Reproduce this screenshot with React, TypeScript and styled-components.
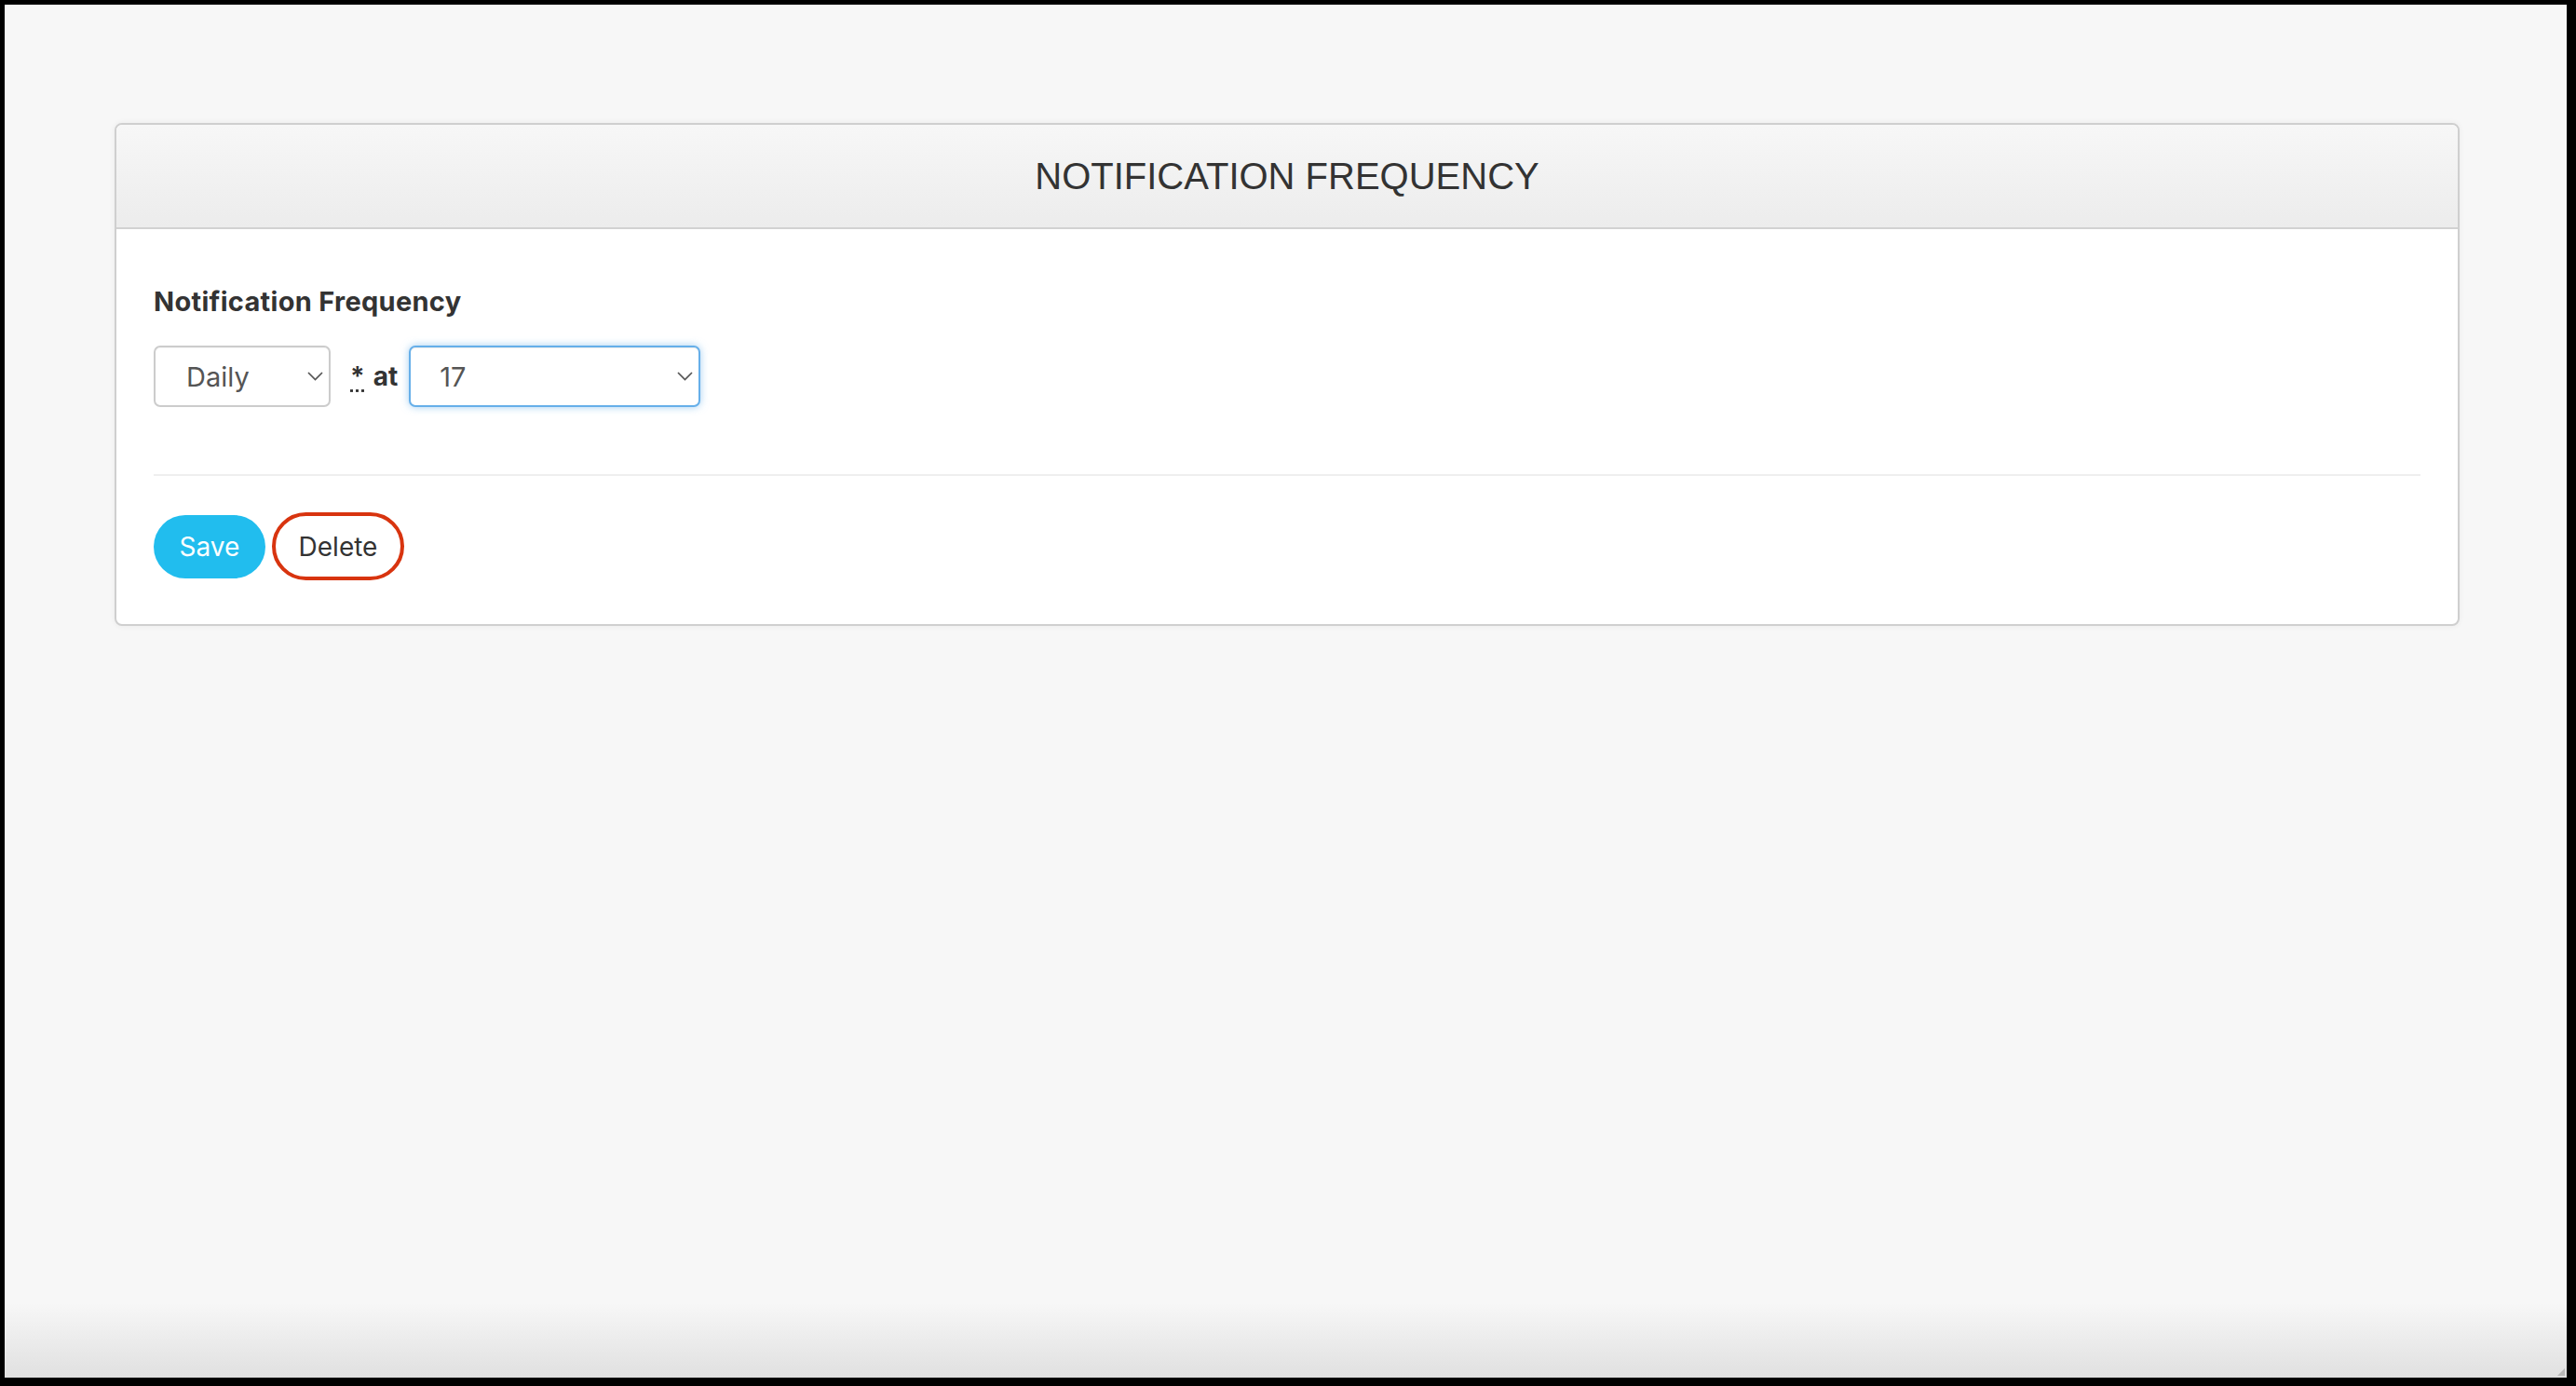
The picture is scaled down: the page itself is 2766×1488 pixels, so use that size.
import React, { useState } from "react";
import styled, { createGlobalStyle } from "styled-components";

const GlobalStyle = createGlobalStyle`
  html, body {
    margin: 0;
    padding: 0;
    background: #000;
  }
  * {
    box-sizing: border-box;
  }
`;

const Window = styled.div`
  position: relative;
  margin: 5px 10px 9px 5px;
  height: 1474px;
  padding: 127px 115px 0 118px;
  background: linear-gradient(
    to bottom,
    #f7f7f7 0,
    #f7f7f7 calc(100% - 80px),
    #e0e0e0 100%
  );
  font-family: Inter, "Open Sans", sans-serif;
  color: #333;
`;

const Grip = styled.div`
  position: absolute;
  right: 2px;
  bottom: 2px;
  width: 0;
  height: 0;
  border-left: 8px solid transparent;
  border-bottom: 8px solid #b8b8b8;
`;

const Card = styled.section`
  background: #fff;
  border: 2px solid #cfcfcf;
  border-radius: 8px;
  box-shadow: 0 0 6px rgba(0, 0, 0, 0.06);
  overflow: hidden;
`;

const CardHeader = styled.header`
  height: 112px;
  display: flex;
  align-items: center;
  justify-content: center;
  background: linear-gradient(to bottom, #f7f7f7, #ececec);
  border-bottom: 2px solid #d2d2d2;
`;

const Title = styled.h2`
  margin: 0;
  font-family: "Liberation Sans", Arial, sans-serif;
  font-weight: 400;
  font-size: 40px;
  color: #333;
`;

const CardBody = styled.div`
  padding: 58px 40px 47px 40px;
`;

const FieldLabel = styled.label`
  display: block;
  font-size: 29px;
  line-height: 40px;
  font-weight: 700;
  letter-spacing: 0.3px;
  color: #333;
`;

const FieldRow = styled.div`
  display: flex;
  align-items: center;
  margin-top: 27px;
`;

const SelectWrap = styled.div<{ $width: number }>`
  position: relative;
  width: ${(p) => p.$width}px;
  height: 66px;
`;

const Select = styled.select<{ $focused?: boolean; $pad: number }>`
  appearance: none;
  -webkit-appearance: none;
  width: 100%;
  height: 100%;
  padding: 0 30px 0 ${(p) => p.$pad}px;
  font-family: Inter, "Open Sans", sans-serif;
  font-size: 29px;
  color: #555;
  background: #fff;
  border: 2px solid ${(p) => (p.$focused ? "#66afe9" : "#cccccc")};
  border-radius: 7px;
  outline: none;
  box-shadow: ${(p) =>
    p.$focused
      ? "inset 0 1px 1px rgba(0,0,0,.075), 0 0 8px rgba(102,175,233,.6)"
      : "inset 0 1px 1px rgba(0,0,0,.04)"};
`;

const Chevron = styled.svg`
  position: absolute;
  right: 8px;
  top: 28px;
  width: 17px;
  height: 10px;
  pointer-events: none;
`;

const Required = styled.abbr`
  margin-left: 21px;
  font-size: 28px;
  font-weight: 700;
  color: #333;
  text-decoration: underline dotted;
  text-underline-offset: 4px;
  cursor: help;
`;

const AtText = styled.span`
  margin: 0 12px 0 9px;
  font-size: 28px;
  font-weight: 700;
  color: #333;
`;

const Divider = styled.hr`
  margin: 72px 0 39px;
  border: 0;
  border-top: 2px solid #efefef;
`;

const Actions = styled.div`
  display: flex;
  align-items: center;
  gap: 7px;
`;

const Button = styled.button<{ $variant: "primary" | "danger" }>`
  font-family: Inter, "Open Sans", sans-serif;
  font-size: 28px;
  cursor: pointer;
  border-radius: 40px;
  ${(p) =>
    p.$variant === "primary"
      ? `
    width: 120px;
    height: 68px;
    background: #21bdee;
    color: #fff;
    border: 0;
  `
      : `
    width: 142px;
    height: 73px;
    background: #fff;
    color: #333;
    border: 4px solid #d8340f;
  `}
`;

const ChevronIcon = () => (
  <Chevron viewBox="0 0 17 10">
    <path d="M1 1l7.5 7.5L16 1" fill="none" stroke="#555" strokeWidth="1.7" />
  </Chevron>
);

const App = () => {
  const [freq, setFreq] = useState("daily");
  const [hour, setHour] = useState("17");

  return (
    <>
      <GlobalStyle />
      <Window>
        <Card>
          <CardHeader>
            <Title>NOTIFICATION FREQUENCY</Title>
          </CardHeader>
          <CardBody>
            <FieldLabel>Notification Frequency</FieldLabel>
            <FieldRow>
              <SelectWrap $width={190}>
                <Select $pad={33} value={freq} onChange={(e) => setFreq(e.target.value)}>
                  <option value="daily">Daily</option>
                  <option value="weekly">Weekly</option>
                  <option value="monthly">Monthly</option>
                </Select>
                <ChevronIcon />
              </SelectWrap>
              <Required title="required">*</Required>
              <AtText>at</AtText>
              <SelectWrap $width={313}>
                <Select $focused $pad={31} value={hour} onChange={(e) => setHour(e.target.value)}>
                  {Array.from({ length: 24 }, (_, i) => (
                    <option key={i} value={String(i)}>
                      {i}
                    </option>
                  ))}
                </Select>
                <ChevronIcon />
              </SelectWrap>
            </FieldRow>
            <Divider />
            <Actions>
              <Button $variant="primary">Save</Button>
              <Button $variant="danger">Delete</Button>
            </Actions>
          </CardBody>
        </Card>
        <Grip />
      </Window>
    </>
  );
};

export default App;
